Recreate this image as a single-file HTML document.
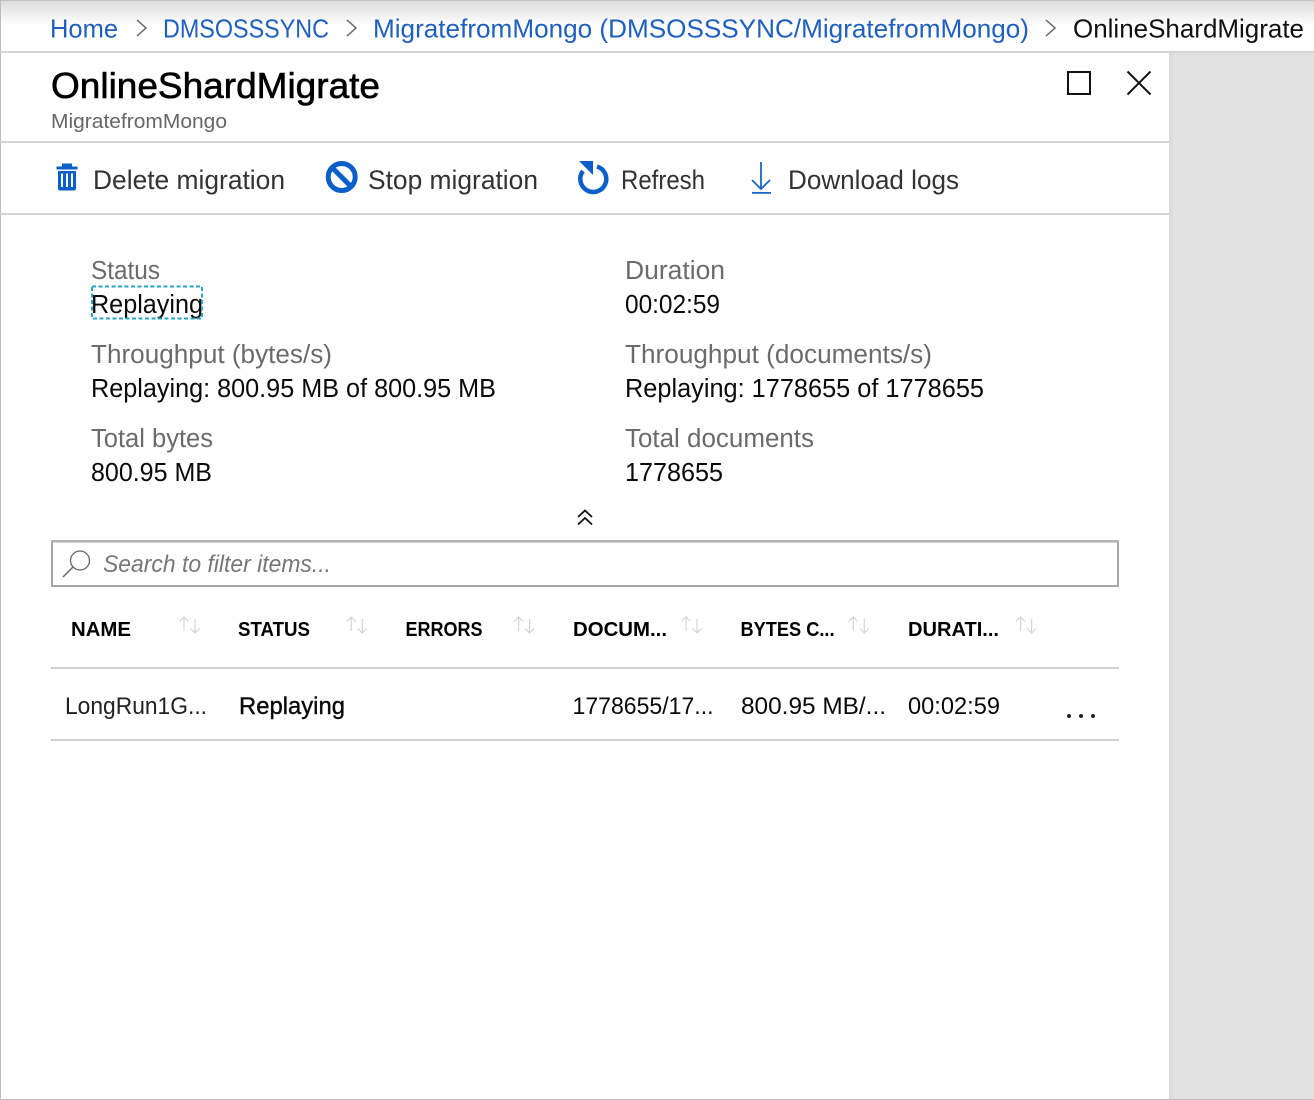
<!DOCTYPE html>
<html lang="en"><head><meta charset="utf-8"><title>OnlineShardMigrate</title>
<style>
html,body{margin:0;padding:0;width:1314px;height:1100px;overflow:hidden;background:#fff}
svg{display:block}
text{font-family:"Liberation Sans",sans-serif}
</style></head><body>
<svg width="1314" height="1100" viewBox="0 0 1314 1100" xmlns="http://www.w3.org/2000/svg">
<defs><linearGradient id="g" x1="0" y1="0" x2="0" y2="1"><stop offset="0" stop-color="#dedede"/><stop offset="1" stop-color="#fff"/></linearGradient></defs>
<rect width="1314" height="1100" fill="#fff"/>
<rect x="1" y="1" width="1313" height="25" fill="url(#g)"/>
<rect y="0" width="1314" height="1" fill="#c4c4c4"/>
<rect x="1170" y="53" width="144" height="1047" fill="#e2e2e2"/>
<rect x="1169" y="53" width="4" height="1047" fill="#dcdcdc"/>
<rect x="0" y="0" width="1" height="1100" fill="#bdbdbd"/>
<rect y="1099" width="1314" height="1" fill="#bdbdbd"/>
<rect y="51" width="1314" height="2" fill="#d4d4d4"/>
<rect y="141" width="1169" height="2" fill="#d4d4d4"/>
<rect y="213" width="1169" height="2" fill="#d4d4d4"/>

<g font-size="26" fill="#1f5fbf">
<text x="50" y="37.500" textLength="68" lengthAdjust="spacingAndGlyphs">Home</text>
<text x="163" y="37.500" textLength="166" lengthAdjust="spacingAndGlyphs">DMSOSSSYNC</text>
<text x="373" y="37.500" textLength="656" lengthAdjust="spacingAndGlyphs">MigratefromMongo (DMSOSSSYNC/MigratefromMongo)</text>
</g>
<text x="1073" y="37.500" font-size="26" fill="#111" textLength="231" lengthAdjust="spacingAndGlyphs">OnlineShardMigrate</text>
<g fill="none" stroke="#666" stroke-width="1.500">
<path d="M137 20l9 8-9 8"/><path d="M347 20l9 8-9 8"/><path d="M1046 20l9 8-9 8"/>
</g>

<text x="51" y="98" font-size="36" fill="#000" stroke="#000" stroke-width=".6" textLength="329" lengthAdjust="spacingAndGlyphs">OnlineShardMigrate</text>
<text x="51" y="128" font-size="20.500" fill="#666" textLength="176" lengthAdjust="spacingAndGlyphs">MigratefromMongo</text>
<rect x="1068" y="72" width="22" height="22" fill="none" stroke="#111" stroke-width="2"/>
<path d="M1127.500 71.500l23 23M1150.500 71.500l-23 23" fill="none" stroke="#111" stroke-width="2"/>

<g fill="#0b5fc9">
<rect x="62" y="163.500" width="10" height="3"/><rect x="56.500" y="166.500" width="21" height="3"/>
<path d="M58 171h18v17.500a2 2 0 0 1-2 2H60a2 2 0 0 1-2-2zM61 173.500v13.500h2v-13.500zM66 173.500v13.500h2v-13.500zM71 173.500v13.500h2v-13.500z" fill-rule="evenodd"/>
</g>
<circle cx="341.700" cy="177" r="13.500" fill="none" stroke="#0b5fc9" stroke-width="5"/>
<path d="M332 167.500l19 19" stroke="#0b5fc9" stroke-width="5" fill="none"/>
<path d="M597 166.500A13 13 0 1 1 583 171" fill="none" stroke="#0b5fc9" stroke-width="4.500"/>
<path d="M579 161h14v14z" fill="#0b5fc9"/>
<path d="M761 162v27M752 180l9 9 9-9" fill="none" stroke="#1a68c8" stroke-width="1.800"/>
<rect x="752" y="192" width="19" height="1.800" fill="#1a68c8"/>

<g font-size="27" fill="#333">
<text x="93" y="189" textLength="192" lengthAdjust="spacingAndGlyphs">Delete migration</text>
<text x="368" y="189" textLength="170" lengthAdjust="spacingAndGlyphs">Stop migration</text>
<text x="621" y="189" textLength="84" lengthAdjust="spacingAndGlyphs">Refresh</text>
<text x="788" y="189" textLength="171" lengthAdjust="spacingAndGlyphs">Download logs</text>
</g>

<g font-size="25.500" fill="#6b6b6b">
<text x="91" y="279" textLength="69" lengthAdjust="spacingAndGlyphs">Status</text>
<text x="625" y="279" textLength="100" lengthAdjust="spacingAndGlyphs">Duration</text>
<text x="91" y="363" textLength="241" lengthAdjust="spacingAndGlyphs">Throughput (bytes/s)</text>
<text x="625" y="363" textLength="307" lengthAdjust="spacingAndGlyphs">Throughput (documents/s)</text>
<text x="91" y="447" textLength="122" lengthAdjust="spacingAndGlyphs">Total bytes</text>
<text x="625" y="447" textLength="189" lengthAdjust="spacingAndGlyphs">Total documents</text>
</g>
<g font-size="25.500" fill="#0a0a0a">
<text x="91" y="313" textLength="112" lengthAdjust="spacingAndGlyphs">Replaying</text>
<text x="625" y="313" textLength="95" lengthAdjust="spacingAndGlyphs">00:02:59</text>
<text x="91" y="397" textLength="405" lengthAdjust="spacingAndGlyphs">Replaying: 800.95 MB of 800.95 MB</text>
<text x="625" y="397" textLength="359" lengthAdjust="spacingAndGlyphs">Replaying: 1778655 of 1778655</text>
<text x="91" y="481" textLength="121" lengthAdjust="spacingAndGlyphs">800.95 MB</text>
<text x="625" y="481" textLength="98" lengthAdjust="spacingAndGlyphs">1778655</text>
</g>
<rect x="92" y="286.500" width="110" height="32" fill="none" stroke="#2aa5c4" stroke-width="2" stroke-dasharray="4 2.500"/>

<path d="M578 517l7-6.500 7 6.500M578 524.500l7-6.500 7 6.500" fill="none" stroke="#111" stroke-width="1.800"/>

<rect x="52" y="541.500" width="1066" height="44.500" fill="#fff" stroke="#a6a6a6" stroke-width="2"/>
<rect x="51" y="540" width="1068" height="2" fill="#b4b4b4"/>
<circle cx="80" cy="560.500" r="9.500" fill="none" stroke="#666" stroke-width="1.300"/>
<path d="M63 577l10.500-10.500" stroke="#666" stroke-width="1.500" fill="none"/>
<text x="103" y="572" font-size="24" font-style="italic" fill="#777" textLength="228" lengthAdjust="spacingAndGlyphs">Search to filter items...</text>

<g font-size="20.500" font-weight="700" fill="#000">
<text x="71" y="636" textLength="60" lengthAdjust="spacingAndGlyphs">NAME</text>
<text x="238" y="636" textLength="72" lengthAdjust="spacingAndGlyphs">STATUS</text>
<text x="405.500" y="636" textLength="77" lengthAdjust="spacingAndGlyphs">ERRORS</text>
<text x="573" y="636" textLength="94" lengthAdjust="spacingAndGlyphs">DOCUM...</text>
<text x="740.500" y="636" textLength="94" lengthAdjust="spacingAndGlyphs">BYTES C...</text>
<text x="908" y="636" textLength="91" lengthAdjust="spacingAndGlyphs">DURATI...</text>
</g>
<g fill="none" stroke="#d4d4d4" stroke-width="1.200">
<path d="M184 631v-14M179.500 621.500l4.500-4.500 4.500 4.500M195 619v14M190.500 628.500l4.500 4.500 4.500-4.500"/>
<path transform="translate(167.300 0)" d="M184 631v-14M179.500 621.500l4.500-4.500 4.500 4.500M195 619v14M190.500 628.500l4.500 4.500 4.500-4.500"/>
<path transform="translate(334.600 0)" d="M184 631v-14M179.500 621.500l4.500-4.500 4.500 4.500M195 619v14M190.500 628.500l4.500 4.500 4.500-4.500"/>
<path transform="translate(502 0)" d="M184 631v-14M179.500 621.500l4.500-4.500 4.500 4.500M195 619v14M190.500 628.500l4.500 4.500 4.500-4.500"/>
<path transform="translate(669.300 0)" d="M184 631v-14M179.500 621.500l4.500-4.500 4.500 4.500M195 619v14M190.500 628.500l4.500 4.500 4.500-4.500"/>
<path transform="translate(836.600 0)" d="M184 631v-14M179.500 621.500l4.500-4.500 4.500 4.500M195 619v14M190.500 628.500l4.500 4.500 4.500-4.500"/>
</g>
<rect x="51" y="667" width="1068" height="2" fill="#d0d0d0"/>
<rect x="51" y="739" width="1068" height="2" fill="#d0d0d0"/>

<g font-size="24.500" fill="#0a0a0a">
<text x="65" y="714" fill="#222" textLength="142" lengthAdjust="spacingAndGlyphs">LongRun1G...</text>
<text x="239" y="714" stroke="#0a0a0a" stroke-width=".4" textLength="106" lengthAdjust="spacingAndGlyphs">Replaying</text>
<text x="572.500" y="714" textLength="141" lengthAdjust="spacingAndGlyphs">1778655/17...</text>
<text x="741" y="714" textLength="145" lengthAdjust="spacingAndGlyphs">800.95 MB/...</text>
<text x="908" y="714" textLength="92" lengthAdjust="spacingAndGlyphs">00:02:59</text>
</g>
<g fill="#222"><circle cx="1069" cy="716" r="2"/><circle cx="1081" cy="716" r="2"/><circle cx="1093" cy="716" r="2"/></g>
</svg>
</body></html>
